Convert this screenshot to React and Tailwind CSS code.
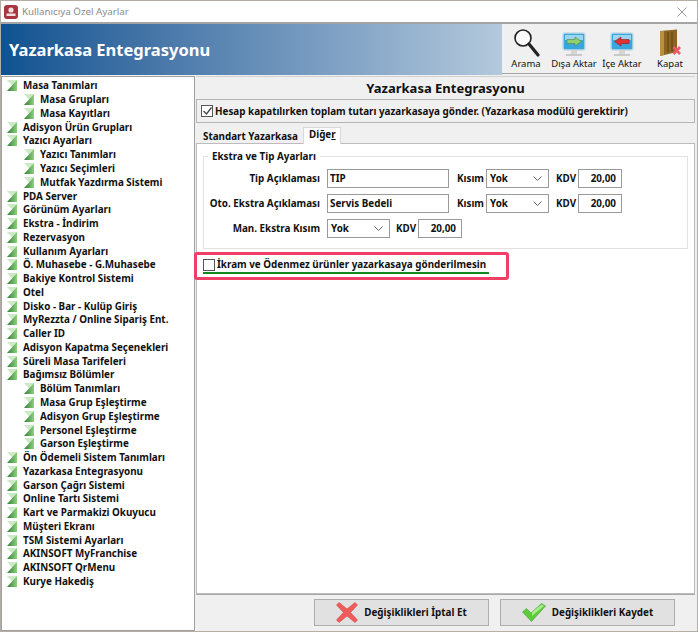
import React from 'react';

const font = 'font-["Noto_Sans","Liberation_Sans",sans-serif]';

const menu = [
  ['Masa Tanımları', 0], ['Masa Grupları', 1], ['Masa Kayıtları', 1], ['Adisyon Ürün Grupları', 0],
  ['Yazıcı Ayarları', 0], ['Yazıcı Tanımları', 1], ['Yazıcı Seçimleri', 1], ['Mutfak Yazdırma Sistemi', 1],
  ['PDA Server', 0], ['Görünüm Ayarları', 0], ['Ekstra - İndirim', 0], ['Rezervasyon', 0],
  ['Kullanım Ayarları', 0], ['Ö. Muhasebe - G.Muhasebe', 0], ['Bakiye Kontrol Sistemi', 0], ['Otel', 0],
  ['Disko - Bar - Kulüp Giriş', 0], ['MyRezzta / Online Sipariş Ent.', 0], ['Caller ID', 0],
  ['Adisyon Kapatma Seçenekleri', 0], ['Süreli Masa Tarifeleri', 0], ['Bağımsız Bölümler', 0],
  ['Bölüm Tanımları', 1], ['Masa Grup Eşleştirme', 1], ['Adisyon Grup Eşleştirme', 1],
  ['Personel Eşleştirme', 1], ['Garson Eşleştirme', 1], ['Ön Ödemeli Sistem Tanımları', 0],
  ['Yazarkasa Entegrasyonu', 0], ['Garson Çağrı Sistemi', 0], ['Online Tartı Sistemi', 0],
  ['Kart ve Parmakizi Okuyucu', 0], ['Müşteri Ekranı', 0], ['TSM Sistemi Ayarları', 0],
  ['AKINSOFT MyFranchise', 0], ['AKINSOFT QrMenu', 0], ['Kurye Hakediş', 0],
];

const TreeIcon = () => (
  <svg width="10" height="11" viewBox="0 0 10 11" className="shrink-0">
    <defs>
      <linearGradient id="treeGreen" x1="0" y1="0" x2="1" y2="0">
        <stop offset="0" stopColor="#2f7d35" />
        <stop offset="1" stopColor="#8ed07f" />
      </linearGradient>
    </defs>
    <path d="M0 0 L10 0 L10 11 Z" fill="#cdeac6" />
    <path d="M10 0 L10 11 L0 11 Z" fill="url(#treeGreen)" />
  </svg>
);

const AppIcon = () => (
  <svg width="14" height="14" viewBox="0 0 14 14" className="shrink-0">
    <rect x="0" y="0" width="14" height="14" rx="3" fill="#a8353f" />
    <circle cx="7" cy="5" r="2.6" fill="#f4dfe0" />
    <rect x="2.5" y="8.5" width="9" height="2.5" fill="#f4dfe0" />
  </svg>
);

const SearchIcon = () => (
  <svg width="27" height="29" viewBox="0 0 27 29">
    <circle cx="10" cy="10" r="8" fill="#fafafa" stroke="#222" strokeWidth="1.6" />
    <path d="M16 16 L25 27" stroke="#222" strokeWidth="3.2" strokeLinecap="round" />
  </svg>
);

const MonitorIcon = ({ color, dir }) => (
  <svg width="24" height="25" viewBox="0 0 24 25">
    <rect x="1" y="1" width="22" height="17" rx="2" fill="#38a7dc" stroke="#c2d9e6" strokeWidth="1.5" />
    <rect x="3" y="3" width="18" height="5" fill="#9ad6ef" />
    {dir === 'right' ? (
      <path d="M5 7.5 H13 V5 L19.5 9.5 L13 14 V11.5 H5 Z" fill={color} stroke="#5b7f4a" strokeWidth="0.6" />
    ) : (
      <path d="M19 7.5 H11 V5 L4.5 9.5 L11 14 V11.5 H19 Z" fill={color} stroke="#8a2020" strokeWidth="0.6" />
    )}
    <rect x="9" y="18" width="6" height="4" fill="#d5d5d5" />
    <rect x="4" y="22" width="16" height="2" fill="#c9c9c9" />
  </svg>
);

const DoorIcon = () => (
  <svg width="24" height="28" viewBox="0 0 24 28">
    <path d="M2 2 L19 0.5 V23 L2 27 Z" fill="#8a6420" />
    <path d="M2 2 L6 2 V26 L2 27 Z" fill="#b8913f" />
    <path d="M10 3 V23 M14 3 V22" stroke="#5f4312" strokeWidth="1" />
    <path d="M15.5 18 L22 25 M22 18 L15.5 25" stroke="#ee5a6a" strokeWidth="2.6" />
  </svg>
);

const CrossIcon = () => (
  <svg width="22" height="21" viewBox="0 0 22 21" className="shrink-0">
    <path d="M3 0.5 L11 7 L19 0.5 L21.5 3 L14.5 10.5 L21.5 18 L19 20.5 L11 14 L3 20.5 L0.5 18 L7.5 10.5 L0.5 3 Z" fill="#ee5c5c" stroke="#d84545" strokeWidth="0.6" />
  </svg>
);

const CheckIcon = () => (
  <svg width="24" height="19" viewBox="0 0 24 19" className="shrink-0">
    <path d="M0.5 9 L4.5 5.5 L9 10 L19.5 0.5 L23.5 3 L9.5 18.5 Z" fill="#5ecb3a" stroke="#3da52a" strokeWidth="0.6" />
    <path d="M10 9 L19.5 1.5 L22 3 L10 13 Z" fill="#a5eb8a" />
  </svg>
);

const Chevron = () => (
  <svg width="9" height="5" viewBox="0 0 9 5" className="shrink-0">
    <path d="M0.5 0.5 L4.5 4.5 L8.5 0.5" fill="none" stroke="#666" strokeWidth="1" />
  </svg>
);

const ToolButton = ({ icon, label }) => (
  <div className="flex flex-col items-center justify-end h-full pb-[3px] w-[48px]">
    <div className="flex items-end h-[32px]">{icon}</div>
    <span className="text-[9.5px] leading-[12px] font-normal text-[#111] whitespace-nowrap mt-[1px]">{label}</span>
  </div>
);

const Select = () => (
  <div className="flex items-center justify-between w-[63px] h-[19px] pl-[3px] pr-[6px] bg-white border border-[#9a9a9a]">
    <span>Yok</span>
    <Chevron />
  </div>
);

const TextBox = ({ width, children, right }) => (
  <div className={`flex items-center h-[19px] bg-white border border-[#9a9a9a] ${width} ${right ? 'justify-end pr-[5px]' : 'px-[2px]'}`}>
    {children}
  </div>
);

const Row = ({ children }) => <div className="flex items-center h-[19px] whitespace-nowrap">{children}</div>;

const ActionButton = ({ icon, label }) => (
  <div className="flex items-center justify-center gap-[6px] w-[175px] h-[27px] bg-[#e1e1e1] border border-[#adadad]">
    {icon}
    <span>{label}</span>
  </div>
);

export default function App() {
  return (
    <div className={`${font} w-[698px] h-[632px] flex flex-col overflow-hidden bg-[#b5aea5] text-[9.85px] leading-[13px] font-bold text-[#111]`}>
      {/* title bar */}
      <div className="flex items-center h-[23px] shrink-0 mt-[1px] pl-[3px] pr-[10px] bg-white border-b-2 border-[#a5a5a5] mx-[1px]">
        <AppIcon />
        <span className="ml-[4px] flex-1 text-[9.75px] font-normal text-[#8a8a8a]">Kullanıcıya Özel Ayarlar</span>
        <svg width="10" height="10" viewBox="0 0 10 10">
          <path d="M0.5 0.5 L9.5 9.5 M9.5 0.5 L0.5 9.5" stroke="#9a9a9a" strokeWidth="1" />
        </svg>
      </div>

      {/* header band */}
      <div className="flex h-[51px] shrink-0 mx-[1px] bg-[#f0f0f0]">
        <div className="flex items-center w-[501px] pl-[8px] bg-gradient-to-r from-[#0d5290] to-[#b4c9dc]">
          <span className="text-[16.5px] leading-[20px] font-bold text-white">Yazarkasa Entegrasyonu</span>
        </div>
        <div className="flex flex-1 border-b border-[#a8a8a8] mb-[1px]">
          <ToolButton icon={<SearchIcon />} label="Arama" />
          <ToolButton icon={<MonitorIcon color="#8fd06a" dir="right" />} label="Dışa Aktar" />
          <ToolButton icon={<MonitorIcon color="#e03232" dir="left" />} label="İçe Aktar" />
          <ToolButton icon={<DoorIcon />} label="Kapat" />
        </div>
      </div>

      {/* body */}
      <div className="flex flex-1 min-h-0 mx-[1px] mb-[1px] pt-[1px] bg-[#f0f0f0]">
        <div className="w-[194px] shrink-0 pt-[2px] bg-white border border-[#a0a0a0]">
          {menu.map(([label, level]) => (
            <div key={label} className={`flex items-center h-[13.78px] gap-[6px] whitespace-nowrap ${level ? 'pl-[22px]' : 'pl-[5px]'}`}>
              <TreeIcon />
              <span>{label}</span>
            </div>
          ))}
        </div>

        <div className="flex flex-col flex-1 min-w-0 ml-[1px] mr-[2px]">
          <div className="h-[23px] shrink-0 flex items-center justify-center bg-[#f0f0f0] border-t border-[#d0d0d0] text-[13px]">
            Yazarkasa Entegrasyonu
          </div>

          <div className="flex items-center h-[24px] shrink-0 pl-[4px] bg-[#f0f0f0] border border-[#b5b5b5]">
            <span className="flex items-center justify-center w-[12px] h-[12px] mr-[2px] bg-white border border-[#555]">
              <svg width="9" height="8" viewBox="0 0 9 8">
                <path d="M0.5 4 L3.5 7 L8.5 0.5" fill="none" stroke="#444" strokeWidth="1.3" />
              </svg>
            </span>
            <span>Hesap kapatılırken toplam tutarı yazarkasaya gönder. (Yazarkasa modülü gerektirir)</span>
          </div>

          <div className="flex items-end h-[20px] shrink-0 pl-[2px]">
            <div className="w-[105px] h-[17px] flex items-center pl-[5px] pt-[3px] whitespace-nowrap">Standart Yazarkasa</div>
            <div className="relative w-[38px] h-[17px] -mb-[1px] flex items-start pl-[5px] bg-white border-x border-t border-[#d8d8d8]">
              <span>Diğe<span className="underline">r</span></span>
            </div>
          </div>

          <div className="flex-1 min-h-0 flex flex-col pt-[12px] bg-white border border-[#bcbcbc]">
            <div className="relative ml-[6px] w-[485px] h-[93px] shrink-0 border border-[#e2e2e2]">
              <span className="absolute -top-[7px] left-[4px] px-[4px] bg-white whitespace-nowrap">Ekstra ve Tip Ayarları</span>
              <div className="flex flex-col gap-[6px] pt-[12px]">
                <Row>
                  <span className="w-[116px] text-right mr-[7px]">Tip Açıklaması</span>
                  <TextBox width="w-[122px]">TIP</TextBox>
                  <span className="w-[37px] pl-[8px]">Kısım</span>
                  <Select />
                  <span className="w-[29px] pl-[7px]">KDV</span>
                  <TextBox width="w-[44px]" right>20,00</TextBox>
                </Row>
                <Row>
                  <span className="w-[116px] text-right mr-[7px]">Oto. Ekstra Açıklaması</span>
                  <TextBox width="w-[122px]">Servis Bedeli</TextBox>
                  <span className="w-[37px] pl-[8px]">Kısım</span>
                  <Select />
                  <span className="w-[29px] pl-[7px]">KDV</span>
                  <TextBox width="w-[44px]" right>20,00</TextBox>
                </Row>
                <Row>
                  <span className="w-[116px] text-right mr-[7px]">Man. Ekstra Kısım</span>
                  <Select />
                  <span className="w-[28px] pl-[6px]">KDV</span>
                  <TextBox width="w-[44px]" right>20,00</TextBox>
                </Row>
              </div>
            </div>

            {/* highlighted option */}
            <div className="flex items-start w-[315px] h-[28px] mt-[3px] -ml-[3px] pl-[6px] pt-[3px] rounded-[3px] border-[3px] border-[#ef3f66]">
              <div className="flex flex-col">
                <div className="flex items-center whitespace-nowrap">
                  <span className="w-[12px] h-[12px] mr-[2px] bg-white border border-[#555]" />
                  <span>İkram ve Ödenmez ürünler yazarkasaya gönderilmesin</span>
                </div>
                <div className="w-[286px] h-[2px] mt-[1px] bg-[#0f8a1f]" />
              </div>
            </div>
          </div>

          <div className="flex items-start justify-end gap-[11px] h-[37px] shrink-0 pt-[4px] pr-[20px] bg-[#f0f0f0] border-t border-[#a8a8a8]">
            <ActionButton icon={<CrossIcon />} label="Değişiklikleri İptal Et" />
            <ActionButton icon={<CheckIcon />} label="Değişiklikleri Kaydet" />
          </div>
        </div>
      </div>
    </div>
  );
}
